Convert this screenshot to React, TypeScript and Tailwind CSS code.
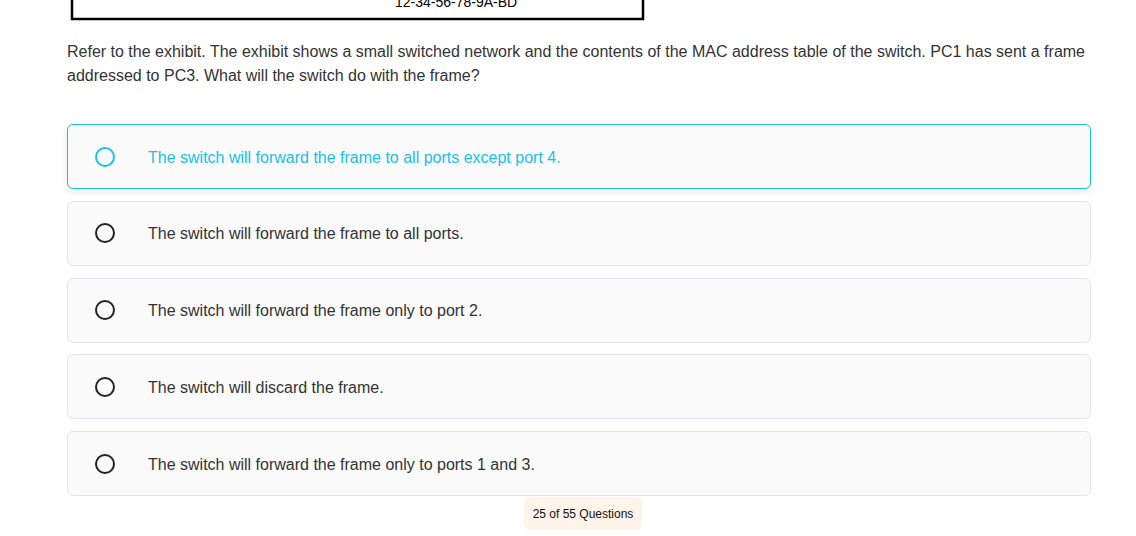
import { useState } from "react"

const options = [
  "The switch will forward the frame to all ports except port 4.",
  "The switch will forward the frame to all ports.",
  "The switch will forward the frame only to port 2.",
  "The switch will discard the frame.",
  "The switch will forward the frame only to ports 1 and 3.",
]

function Exhibit() {
  // bottom edge of the exhibit image, the rest is scrolled off
  return (
    <svg width="576" height="21" viewBox="0 0 576 21" className="block ml-[3px]">
      <rect x="2" y="-10" width="571" height="29" fill="#fff" stroke="#000" strokeWidth="2.5" />
      <text x="325" y="7" fontFamily="'Liberation Sans', Arial, sans-serif" fontSize="14" fill="#000">
        12-34-56-78-9A-BD
      </text>
    </svg>
  )
}

export default function App() {
  const [hovered] = useState(0)

  return (
    <div className="w-[1136px] h-[536px] overflow-hidden bg-white font-['Liberation_Sans',Arial,sans-serif]">
      <div className="ml-[67px] w-[1024px]">
        <Exhibit />

        <p className="mt-[19px] text-[16px] leading-[24px] text-[#333]">
          Refer to the exhibit. The exhibit shows a small switched network and the contents of the MAC address table of the switch. PC1 has sent a frame addressed to PC3. What will the switch do with the frame?
        </p>

        <div className="mt-[36px] flex flex-col gap-[11.75px]">
          {options.map((text, i) => {
            const active = i === hovered
            return (
              <div
                key={i}
                className={
                  active
                    ? "h-[65px] flex items-center rounded-md border border-[#1cbfe9] bg-[#fafafa] shadow-[0_2px_8px_rgba(0,0,0,0.1)]"
                    : "h-[65px] flex items-center rounded-md border border-[#e3e5ea] bg-[#fafafa]"
                }
              >
                <span
                  className={
                    active
                      ? "ml-[27px] w-5 h-5 rounded-full border-[2.5px] border-[#1cbfe9]"
                      : "ml-[27px] w-5 h-5 rounded-full border-[2.5px] border-[#222]"
                  }
                />
                <span className={active ? "ml-[33px] pt-[2px] text-[16px] text-[#1cbfe9]" : "ml-[33px] pt-[2px] text-[16px] text-[#333]"}>
                  {text}
                </span>
              </div>
            )
          })}
        </div>

        <div className="flex justify-center pl-[8px]">
          <div className="mt-px h-[33px] flex items-center px-[9px] rounded-md bg-[#fff4ea] text-[12px] text-[#111]">
            25 of 55 Questions
          </div>
        </div>
      </div>
    </div>
  )
}
